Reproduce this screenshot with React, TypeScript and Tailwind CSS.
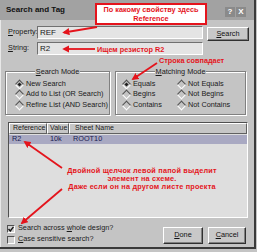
import React from "react";

const RED = "#e4141c";

function Diamond({ on }: { on?: boolean }) {
  return (
    <span className="relative inline-block h-[9px] w-[9px] shrink-0">
      <span className="absolute left-[1px] top-[1px] h-[7px] w-[7px] rotate-45 border border-t-[#505050] border-l-[#505050] border-b-white border-r-white bg-[#c4c4c4]" />
      {on && <span className="absolute left-[3px] top-[3px] h-[3px] w-[3px] rotate-45 bg-[#202020]" />}
    </span>
  );
}

function Check({ on }: { on?: boolean }) {
  return (
    <span className="flex h-[8px] w-[8px] shrink-0 items-center justify-center border border-t-[#505050] border-l-[#505050] border-b-white border-r-white bg-[#d0d0d0]">
      {on && (
        <svg width="6" height="6" viewBox="0 0 6 6">
          <path d="M0.5 3 L2.3 5 L5.5 0.8" stroke="#111" strokeWidth="1.4" fill="none" />
        </svg>
      )}
    </span>
  );
}

function Btn({ children, className }: { children: React.ReactNode; className?: string }) {
  return (
    <div
      className={
        "flex items-center justify-center border border-t-white border-l-white border-b-[#303030] border-r-[#303030] bg-[#c8c8c8] shadow-[inset_-1px_-1px_0_#808080] text-[7.3px] text-[#111] " +
        (className ?? "")
      }
    >
      {children}
    </div>
  );
}

function Radio({ on, label }: { on?: boolean; label: React.ReactNode }) {
  return (
    <div className="flex h-[10.5px] items-center gap-[2px] whitespace-nowrap">
      <Diamond on={on} />
      <span>{label}</span>
    </div>
  );
}

function Group({ title, className, children }: { title: React.ReactNode; className?: string; children: React.ReactNode }) {
  return (
    <div className={"relative border border-[#808080] shadow-[1px_1px_0_white,inset_1px_1px_0_white] " + (className ?? "")}>
      <div className="absolute -top-[5px] left-0 right-0 flex justify-center">
        <span className="bg-[#c4c4c4] px-[1px] leading-[9px]">{title}</span>
      </div>
      {children}
    </div>
  );
}

export default function App() {
  return (
    <div className="relative h-[252px] w-[257px] overflow-hidden bg-[#c4c4c4] font-['Liberation_Sans',Arial,sans-serif] text-[7.3px] text-[#1a1a1a]">
      <div className="flex h-[249px] w-[256px] flex-col border-b-2 border-r-2 border-b-[#3a3a3a] border-r-[#3a3a3a] shadow-[inset_1px_1px_0_#e8e8e8]">
        {/* title bar */}
        <div className="flex h-[20px] items-center justify-between bg-[#a2a2a2] pl-[6px] pr-[8px]">
          <span className="text-[8px] font-bold text-[#111]">Search and Tag</span>
          <div className="mt-[4px] flex gap-[1px]">
            <div className="flex h-[10px] w-[10px] items-center justify-center bg-[#8a8a8a] text-[8px] font-bold text-white">?</div>
            <div className="flex h-[10px] w-[10px] items-center justify-center bg-[#8a8a8a] text-[8px] font-bold text-white">X</div>
          </div>
        </div>

        <div className="flex flex-col px-[5px]">
          <div className="mt-[6px] flex items-start">
            <div className="flex flex-col gap-[3px]">
              <div className="flex h-[13px] items-center">
                <span className="w-[32px] pl-[3px]"><u>P</u>roperty:</span>
                <div className="flex h-[13px] w-[166px] items-center border border-t-[#707070] border-l-[#707070] border-b-white border-r-white bg-[#e4e4e4] pl-[2px] text-[8px]">REF</div>
              </div>
              <div className="flex h-[13px] items-center">
                <span className="w-[32px] pl-[3px]"><u>S</u>tring:</span>
                <div className="flex h-[13px] w-[166px] items-center border border-t-[#707070] border-l-[#707070] border-b-white border-r-white bg-[#e4e4e4] pl-[2px] text-[8px]">R2</div>
              </div>
            </div>
            <Btn className="ml-[4px] mt-[1px] h-[14px] w-[42px]"><span><u>S</u>earch</span></Btn>
          </div>

          {/* group boxes */}
          <div className="mt-[16px] flex gap-[5px]">
            <Group title={<><u>S</u>earch Mode</>} className="h-[44px] w-[105px]">
              <div className="flex flex-col pl-[9px] pt-[7px]">
                <Radio on label="New Search" />
                <Radio label="Add to List (OR Search)" />
                <Radio label="Refine List (AND Search)" />
              </div>
            </Group>
            <Group title={<><u>M</u>atching Mode</>} className="h-[44px] w-[131px]">
              <div className="grid grid-cols-[55px_1fr] pl-[6px] pt-[7px]">
                <div className="flex flex-col">
                  <Radio on label="Equals" />
                  <Radio label="Begins" />
                  <Radio label="Contains" />
                </div>
                <div className="flex flex-col">
                  <Radio label="Not Equals" />
                  <Radio label="Not Begins" />
                  <Radio label="Not Contains" />
                </div>
              </div>
            </Group>
          </div>

          {/* list */}
          <div className="ml-[3px] mt-[7px] flex h-[96px] w-[240px] flex-col border border-t-[#505050] border-l-[#505050] border-b-white border-r-white bg-[#dedede]">
            <div className="flex h-[11px] text-[7px]">
              <div className="flex w-[38px] items-center border border-t-white border-l-white border-b-[#606060] border-r-[#606060] bg-[#c6c6c6] pl-[3px] whitespace-nowrap">Reference</div>
              <div className="flex w-[22px] items-center border border-t-white border-l-white border-b-[#606060] border-r-[#606060] bg-[#c6c6c6] pl-[2px]">Value</div>
              <div className="flex flex-1 items-center border border-t-white border-l-white border-b-[#606060] border-r-[#606060] bg-[#c6c6c6] pl-[5px]">Sheet Name</div>
            </div>
            <div className="mt-[1px] flex h-[9px] items-center bg-[#a9a9c2] text-[7.3px] text-[#1a1a50]">
              <span className="w-[41px] pl-[3px]">R2</span>
              <span className="w-[23px]">10k</span>
              <span>ROOT10</span>
            </div>
            <div className="mt-[23px] flex flex-col items-center pl-[28px] text-[7.3px] font-bold leading-[8.2px] tracking-[0.2px]" style={{ color: RED }}>
              <span>Двойной щелчок левой папой выделит</span>
              <span>элемент на схеме.</span>
              <span>Даже если он на другом листе проекта</span>
            </div>
          </div>

          {/* bottom */}
          <div className="mt-[6px] flex items-start justify-between">
            <div className="flex flex-col gap-[2px] pl-[2px]">
              <div className="flex h-[9px] items-center gap-[3px]">
                <Check on />
                <span>Search across <u>w</u>hole design?</span>
              </div>
              <div className="flex h-[9px] items-center gap-[3px]">
                <Check />
                <span><u>C</u>ase sensitive search?</span>
              </div>
            </div>
            <div className="mt-[3px] flex gap-[5px] pr-[3px]">
              <Btn className="h-[17px] w-[40px]"><span><u>D</u>one</span></Btn>
              <Btn className="h-[17px] w-[38px]"><span><u>C</u>ancel</span></Btn>
            </div>
          </div>
        </div>
      </div>

      {/* annotations */}
      <div className="absolute left-[95px] top-[3px] flex h-[22px] w-[112px] flex-col items-center justify-center border-2 border-[#e4141c] bg-white text-[7.3px] font-bold leading-[9px]" style={{ color: RED }}>
        <span>По какому свойству здесь</span>
        <span>Reference</span>
      </div>
      <div className="absolute left-[97px] top-[45px] text-[7.3px] font-bold leading-[9px]" style={{ color: RED }}>Ищем резистор R2</div>
      <div className="absolute left-[159px] top-[56px] text-[7.3px] font-bold leading-[9px]" style={{ color: RED }}>Строка совпадает</div>

      <svg className="pointer-events-none absolute left-0 top-0" width="257" height="252">
        <defs>
          <marker id="ah" markerWidth="4" markerHeight="4" refX="3" refY="2" orient="auto" markerUnits="strokeWidth">
            <path d="M0,0 L4,2 L0,4 Z" fill={RED} />
          </marker>
        </defs>
        <g stroke={RED} strokeWidth="1.8" fill="none" markerEnd="url(#ah)">
          <line x1="97" y1="27" x2="64" y2="32.5" />
          <line x1="95" y1="49" x2="64" y2="49" />
          <line x1="157" y1="63" x2="133" y2="79" />
          <line x1="62" y1="168" x2="25" y2="142" />
          <line x1="62" y1="189" x2="22" y2="223" />
        </g>
      </svg>
    </div>
  );
}
